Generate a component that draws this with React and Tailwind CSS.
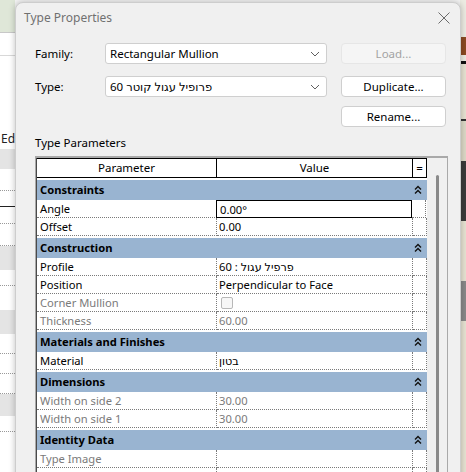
import React from "react";

const font = { fontFamily: '"Noto Sans", "DejaVu Sans", sans-serif' };

const groups = [
  {
    name: "Constraints",
    rows: [
      { p: "Angle", v: "0.00°", edit: true },
      { p: "Offset", v: "0.00" },
    ],
  },
  {
    name: "Construction",
    rows: [
      { p: "Profile", v: "פרפיל עגול : 60" },
      { p: "Position", v: "Perpendicular to Face" },
      { p: "Corner Mullion", check: true, dim: true },
      { p: "Thickness", v: "60.00", dim: true },
    ],
  },
  {
    name: "Materials and Finishes",
    rows: [{ p: "Material", v: "בטון" }],
  },
  {
    name: "Dimensions",
    rows: [
      { p: "Width on side 2", v: "30.00", dim: true },
      { p: "Width on side 1", v: "30.00", dim: true },
    ],
  },
  {
    name: "Identity Data",
    rows: [
      { p: "Type Image", v: "", dim: true },
      { p: "", v: "" },
    ],
  },
];

const Collapse = () => (
  <svg width="8" height="10" viewBox="0 0 8 10">
    <path
      d="M1 4.5 L4 1.5 L7 4.5 M1 8.5 L4 5.5 L7 8.5"
      fill="none"
      stroke="#111"
      strokeWidth="1.4"
    />
  </svg>
);

const Chevron = () => (
  <svg width="10" height="6" viewBox="0 0 10 6">
    <path d="M1 1 L5 5 L9 1" fill="none" stroke="#606060" strokeWidth="1" />
  </svg>
);

const Combo = ({ children }) => (
  <div className="h-[21px] bg-white border border-[#cfcfcf] rounded-[3px] flex items-center justify-between pl-[4px] pr-[6px] text-[11.5px] text-black">
    <span>{children}</span>
    <Chevron />
  </div>
);

const Btn = ({ children, disabled }) => (
  <div
    className={`h-[21px] border rounded-[4px] flex items-center justify-center text-[11.5px] ${
      disabled
        ? "bg-[#f5f5f5] border-[#e6e6e6] text-[#a3a3a3]"
        : "bg-white border-[#cfcfcf] text-black"
    }`}
  >
    {children}
  </div>
);

const LeftStrip = () => (
  <div className="w-[15px] flex flex-col shrink-0 text-[12px]">
    <div className="h-[33px] bg-[#dfe7d8] border-b border-[#c8c8c8]"></div>
    <div className="h-[23px] border-b border-[#d8d8d8]"></div>
    <div className="h-[73px]"></div>
    <div className="h-[20px] leading-[20px] pl-[1px] text-[#222]">Ed</div>
    <div className="h-[20px] bg-[#e4e4e4]"></div>
    <div className="h-[22px] border-b border-dotted border-[#999]"></div>
    <div className="h-[16px] border-b border-[#222]"></div>
    <div className="h-[17px] border-b border-dotted border-[#999]"></div>
    <div className="h-[22px] border-b border-dotted border-[#999]"></div>
    <div className="h-[24px] bg-[#e4e4e4]"></div>
    <div className="h-[16px] border-b border-dotted border-[#999]"></div>
    <div className="h-[24px]"></div>
    <div className="h-[24px] bg-[#e4e4e4]"></div>
    <div className="h-[20px] border-b border-dotted border-[#999]"></div>
    <div className="h-[20px] border-b border-dotted border-[#999]"></div>
    <div className="h-[20px] border-b border-dotted border-[#999]"></div>
    <div className="h-[22px] bg-[#e4e4e4]"></div>
    <div className="h-[16px] border-b border-dotted border-[#999]"></div>
  </div>
);

const RightStrip = () => (
  <div className="w-[6px] flex flex-col shrink-0 bg-[#ecebe2]">
    <div className="h-[37px]"></div>
    <div className="h-[18px] bg-[#8a4a22]"></div>
    <div className="h-[6px]"></div>
    <div className="h-[3px] bg-[#111]"></div>
    <div className="h-[55px] bg-[#e6e2d2]"></div>
    <div className="h-[2px] bg-[#333]"></div>
    <div className="h-[40px] bg-[#dcd8c6]"></div>
    <div className="h-[60px] bg-[#3a3a3a]"></div>
    <div className="h-[60px] bg-[#e6e2d2]"></div>
    <div className="h-[40px] bg-[#888]"></div>
    <div className="flex-1 bg-[#e6e2d2]"></div>
  </div>
);

const Row = ({ r }) => (
  <div className="flex h-[18px] text-[11.2px] leading-[17px]">
    <div
      className={`w-[180px] pl-[3px] border-b border-r border-dotted border-[#7a7a7a] ${
        r.dim ? "text-[#7a7a7a]" : "text-black"
      }`}
    >
      {r.p}
    </div>
    <div
      className={`w-[196px] pl-[2px] flex items-center ${
        r.edit
          ? "border border-black -ml-[1px] pl-[3px] bg-white"
          : "border-b border-r border-dotted border-[#7a7a7a]"
      } ${r.dim ? "text-[#7a7a7a]" : "text-black"}`}
    >
      {r.check ? (
        <span className="block w-[12px] h-[12px] ml-[2px] rounded-[2px] border border-[#b8b8b8] bg-[#f7f7f7]"></span>
      ) : (
        <span>{r.v}</span>
      )}
    </div>
    <div className="w-[14px] border-b border-r border-dotted border-[#7a7a7a]"></div>
  </div>
);

const Group = ({ g }) => (
  <div className="flex flex-col pt-[2px]">
    <div className="h-[20px] bg-[#99b4d1] flex items-center justify-between pl-[3px] pr-[5px] text-[11.2px] font-bold text-black">
      <span>{g.name}</span>
      <Collapse />
    </div>
    {g.rows.map((r, i) => (
      <Row r={r} key={i} />
    ))}
  </div>
);

export default function App() {
  return (
    <div
      className="relative w-[466px] h-[472px] overflow-hidden bg-white flex"
      style={font}
    >
      <LeftStrip />
      <div className="flex-1 bg-[#f4f4f4]"></div>
      <RightStrip />

      <div className="absolute left-[15px] top-[2px] w-[446px] h-[480px] bg-[#f0f0f0] border border-[#cdcdcd] rounded-t-[8px] shadow-[0_0_6px_rgba(0,0,0,0.25)] flex flex-col">
        <div className="h-[34px] shrink-0 flex items-center justify-between pl-[8px] pr-[10px] pb-[5px]">
          <span className="text-[12px] text-[#707070]">Type Properties</span>
          <svg width="12" height="12" viewBox="0 0 12 12">
            <path d="M0.5 0.5 L11.5 11.5 M11.5 0.5 L0.5 11.5" stroke="#6a6a6a" strokeWidth="1" />
          </svg>
        </div>

        <div className="grid grid-cols-[56px_222px_105px] gap-x-[14px] gap-y-[12px] pl-[19px] pt-[6px] items-center text-[11.5px]">
          <span className="text-black">Family:</span>
          <Combo>Rectangular Mullion</Combo>
          <Btn disabled>Load...</Btn>
          <span className="text-black">Type:</span>
          <Combo>פרופיל עגול קוטר 60</Combo>
          <Btn>Duplicate...</Btn>
        </div>
        <div className="grid grid-cols-[56px_222px_105px] gap-x-[14px] pl-[19px] pt-[9px]">
          <span></span>
          <span></span>
          <Btn>Rename...</Btn>
        </div>

        <div className="pl-[19px] pt-[8px] h-[29px] shrink-0 text-[11.5px] text-black leading-[16px]">
          Type Parameters
        </div>

        <div className="ml-[19px] w-[413px] flex-1 border-t-2 border-l border-r border-[#a9a9a9] flex">
          <div className="w-[391px] flex flex-col bg-white border-l border-[#4a4a4a]">
            <div className="flex h-[20px] text-[11.5px] border-t border-b border-black">
              <div className="w-[180px] border-r border-black flex items-center justify-center">
                Parameter
              </div>
              <div className="w-[196px] border-r border-black flex items-center justify-center">
                Value
              </div>
              <div className="w-[14px] border-r border-black flex items-center justify-center">
                =
              </div>
            </div>
            {groups.map((g, i) => (
              <Group g={g} key={i} />
            ))}
          </div>
          <div className="flex-1 flex justify-center pt-[17px]">
            <div className="w-[3px] bg-[#8a8a8a] rounded-full"></div>
          </div>
        </div>
      </div>
    </div>
  );
}
